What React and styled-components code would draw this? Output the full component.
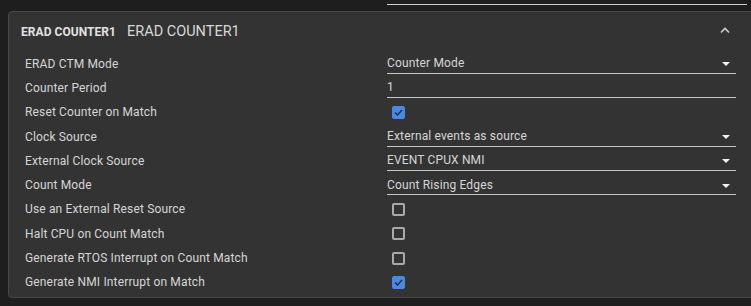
import React from "react";
import styled, { createGlobalStyle } from "styled-components";

const Global = createGlobalStyle`
  html, body { margin: 0; padding: 0; background: #1e1e1e; overflow: hidden; }
  body { font-family: Roboto, "Liberation Sans", sans-serif; }
`;

const Page = styled.div`
  width: 751px;
  height: 306px;
  padding-left: 8px;
  box-sizing: border-box;
  overflow: hidden;
`;

const PrevField = styled.div`
  height: 11px;
  display: flex;
  align-items: flex-start;
  padding-left: 379px;
`;

const PrevLine = styled.div`
  margin-top: 4px;
  width: 360px;
  height: 1px;
  background: #cfcfcf;
`;

const Panel = styled.section`
  width: 780px;
  background: #333333;
  border: 1px solid #474747;
  border-radius: 4px;
  padding-bottom: 3px;
`;

const Header = styled.div`
  height: 39.5px;
  display: flex;
  align-items: center;
  padding-left: 12px;
  gap: 11px;
  position: relative;
`;

const HeaderTag = styled.span`
  font-size: 12px;
  font-weight: 700;
  color: #e2e2e2;
  letter-spacing: 0.05px;
`;

const HeaderTitle = styled.span`
  font-size: 14.5px;
  color: #d8d8d8;
`;

const Collapse = styled.span`
  position: absolute;
  left: 710px;
  top: 14px;
  width: 12px;
  height: 8px;
  display: flex;
`;

const Rows = styled.div`
  padding-left: 16px;
`;

const Row = styled.div`
  display: grid;
  grid-template-columns: 362px 349px;
  height: 24.3px;
  align-items: center;
`;

const Label = styled.span`
  font-size: 12px;
  color: #d6d6d6;
  white-space: nowrap;
  letter-spacing: 0.15px;
`;

const Field = styled.div`
  height: 20px;
  box-sizing: border-box;
  border-bottom: 1px solid #c8c8c8;
  display: flex;
  align-items: center;
  justify-content: space-between;
  font-size: 12px;
  letter-spacing: 0.15px;
  color: #d6d6d6;
  padding-right: 6px;
`;

const Arrow = styled.span`
  width: 0;
  height: 0;
  border-left: 4px solid transparent;
  border-right: 4px solid transparent;
  border-top: 4px solid #f2f2f2;
  margin-top: 2px;
`;

const Box = styled.span`
  margin-left: 5px;
  width: 13px;
  height: 13px;
  box-sizing: border-box;
  border-radius: 2px;
  display: flex;
  align-items: center;
  justify-content: center;
  background: ${(p) => (p.checked ? "#4a88e6" : "transparent")};
  border: ${(p) => (p.checked ? "1px solid #4a88e6" : "2px solid #a9a9a9")};
`;

const rows = [
  { label: "ERAD CTM Mode", type: "select", value: "Counter Mode" },
  { label: "Counter Period", type: "input", value: "1" },
  { label: "Reset Counter on Match", type: "check", value: true },
  { label: "Clock Source", type: "select", value: "External events as source" },
  { label: "External Clock Source", type: "select", value: "EVENT CPUX NMI" },
  { label: "Count Mode", type: "select", value: "Count Rising Edges" },
  { label: "Use an External Reset Source", type: "check", value: false },
  { label: "Halt CPU on Count Match", type: "check", value: false },
  { label: "Generate RTOS Interrupt on Count Match", type: "check", value: false },
  { label: "Generate NMI Interrupt on Match", type: "check", value: true },
];

function Control({ row }) {
  if (row.type === "check") {
    return (
      <div>
        <Box checked={row.value}>
          {row.value && (
            <svg width="9" height="7" viewBox="0 0 9 7">
              <path d="M1 3.5 L3.5 6 L8 1" fill="none" stroke="#2b2b2b" strokeWidth="1.4" />
            </svg>
          )}
        </Box>
      </div>
    );
  }
  return (
    <Field>
      <span>{row.value}</span>
      {row.type === "select" && <Arrow />}
    </Field>
  );
}

export default function App() {
  return (
    <Page>
      <Global />
      <PrevField>
        <PrevLine />
      </PrevField>
      <Panel>
        <Header>
          <HeaderTag>ERAD COUNTER1</HeaderTag>
          <HeaderTitle>ERAD COUNTER1</HeaderTitle>
          <Collapse>
            <svg width="12" height="8" viewBox="0 0 12 8">
              <path d="M2 6.5 L6 2.5 L10 6.5" fill="none" stroke="#cfcfcf" strokeWidth="1.6" />
            </svg>
          </Collapse>
        </Header>
        <Rows>
          {rows.map((r) => (
            <Row key={r.label}>
              <Label>{r.label}</Label>
              <Control row={r} />
            </Row>
          ))}
        </Rows>
      </Panel>
    </Page>
  );
}
